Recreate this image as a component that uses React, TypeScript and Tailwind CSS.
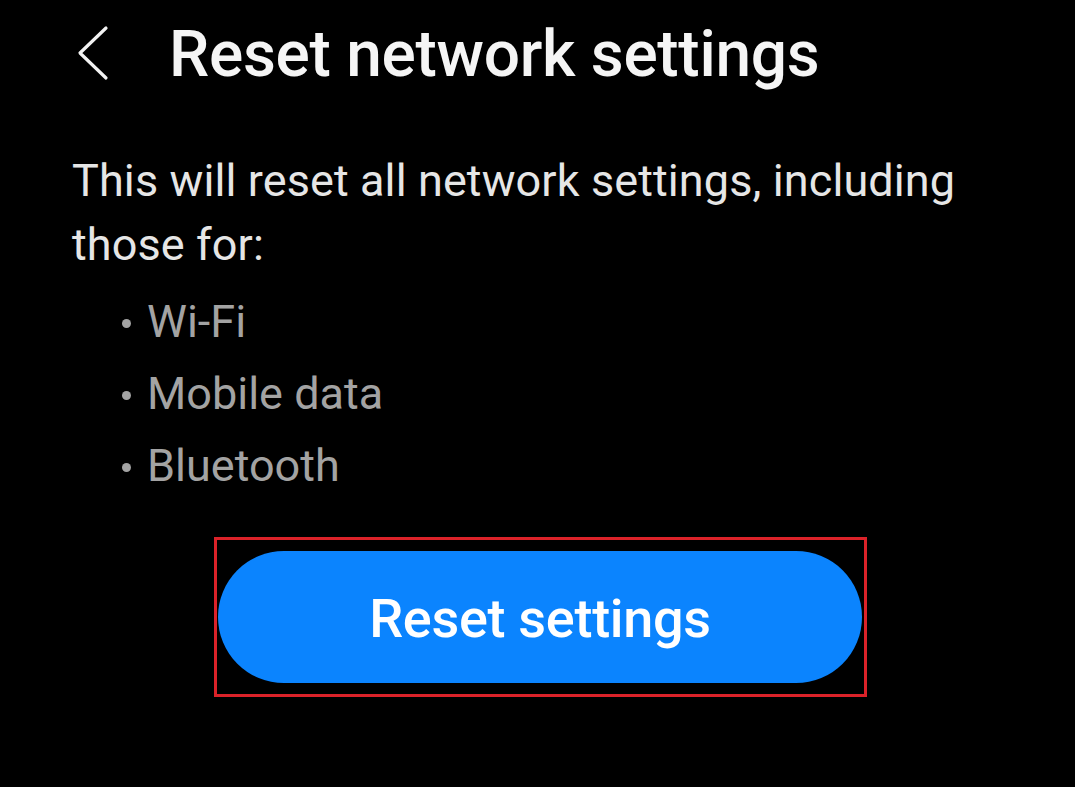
import React from 'react';

const items = ['Wi-Fi', 'Mobile data', 'Bluetooth'];

export default function App() {
  return (
    <div className="w-[1075px] h-[787px] bg-black overflow-hidden font-['Roboto',sans-serif]">
      {/* Header */}
      <div className="flex items-center h-[106px] pl-[76px] pt-[4px]">
        <svg width="34" height="56" viewBox="0 0 34 56" fill="none" className="shrink-0 -mt-[4px]">
          <path d="M30 3 L4 28 L30 53" stroke="#f2f2f2" strokeWidth="3.2" strokeLinecap="round" strokeLinejoin="round" />
        </svg>
        <h1 className="ml-[59px] text-[64px] font-medium text-[#f5f5f5] tracking-[-0.3px] leading-none">
          Reset network settings
        </h1>
      </div>

      {/* Description */}
      <div className="px-[72px] pt-[43px]">
        <p className="text-[45px] leading-[64px] text-[#e6e6e6] tracking-[0.1px]">
          This will reset all network settings, including those for:
        </p>
        <ul className="mt-[9px] pl-[50px]">
          {items.map(item => (
            <li key={item} className="flex items-center h-[72px] text-[45px] text-[#a3a3a3]">
              <span className="w-[9px] h-[9px] rounded-full bg-[#a3a3a3] mr-[16px] mt-[2px]" />
              {item}
            </li>
          ))}
        </ul>
      </div>

      {/* Button */}
      <div className="flex justify-center pt-[35px] pl-[6px]">
        <div className="border-[3px] border-[#db2229] px-[1px] pt-[11px] pb-[11px] w-[653px]">
          <button className="w-[644px] h-[132px] rounded-full bg-[#0b84fe] text-white text-[54px] font-medium tracking-[-0.3px] pt-[3px]">
            Reset settings
          </button>
        </div>
      </div>
    </div>
  );
}
